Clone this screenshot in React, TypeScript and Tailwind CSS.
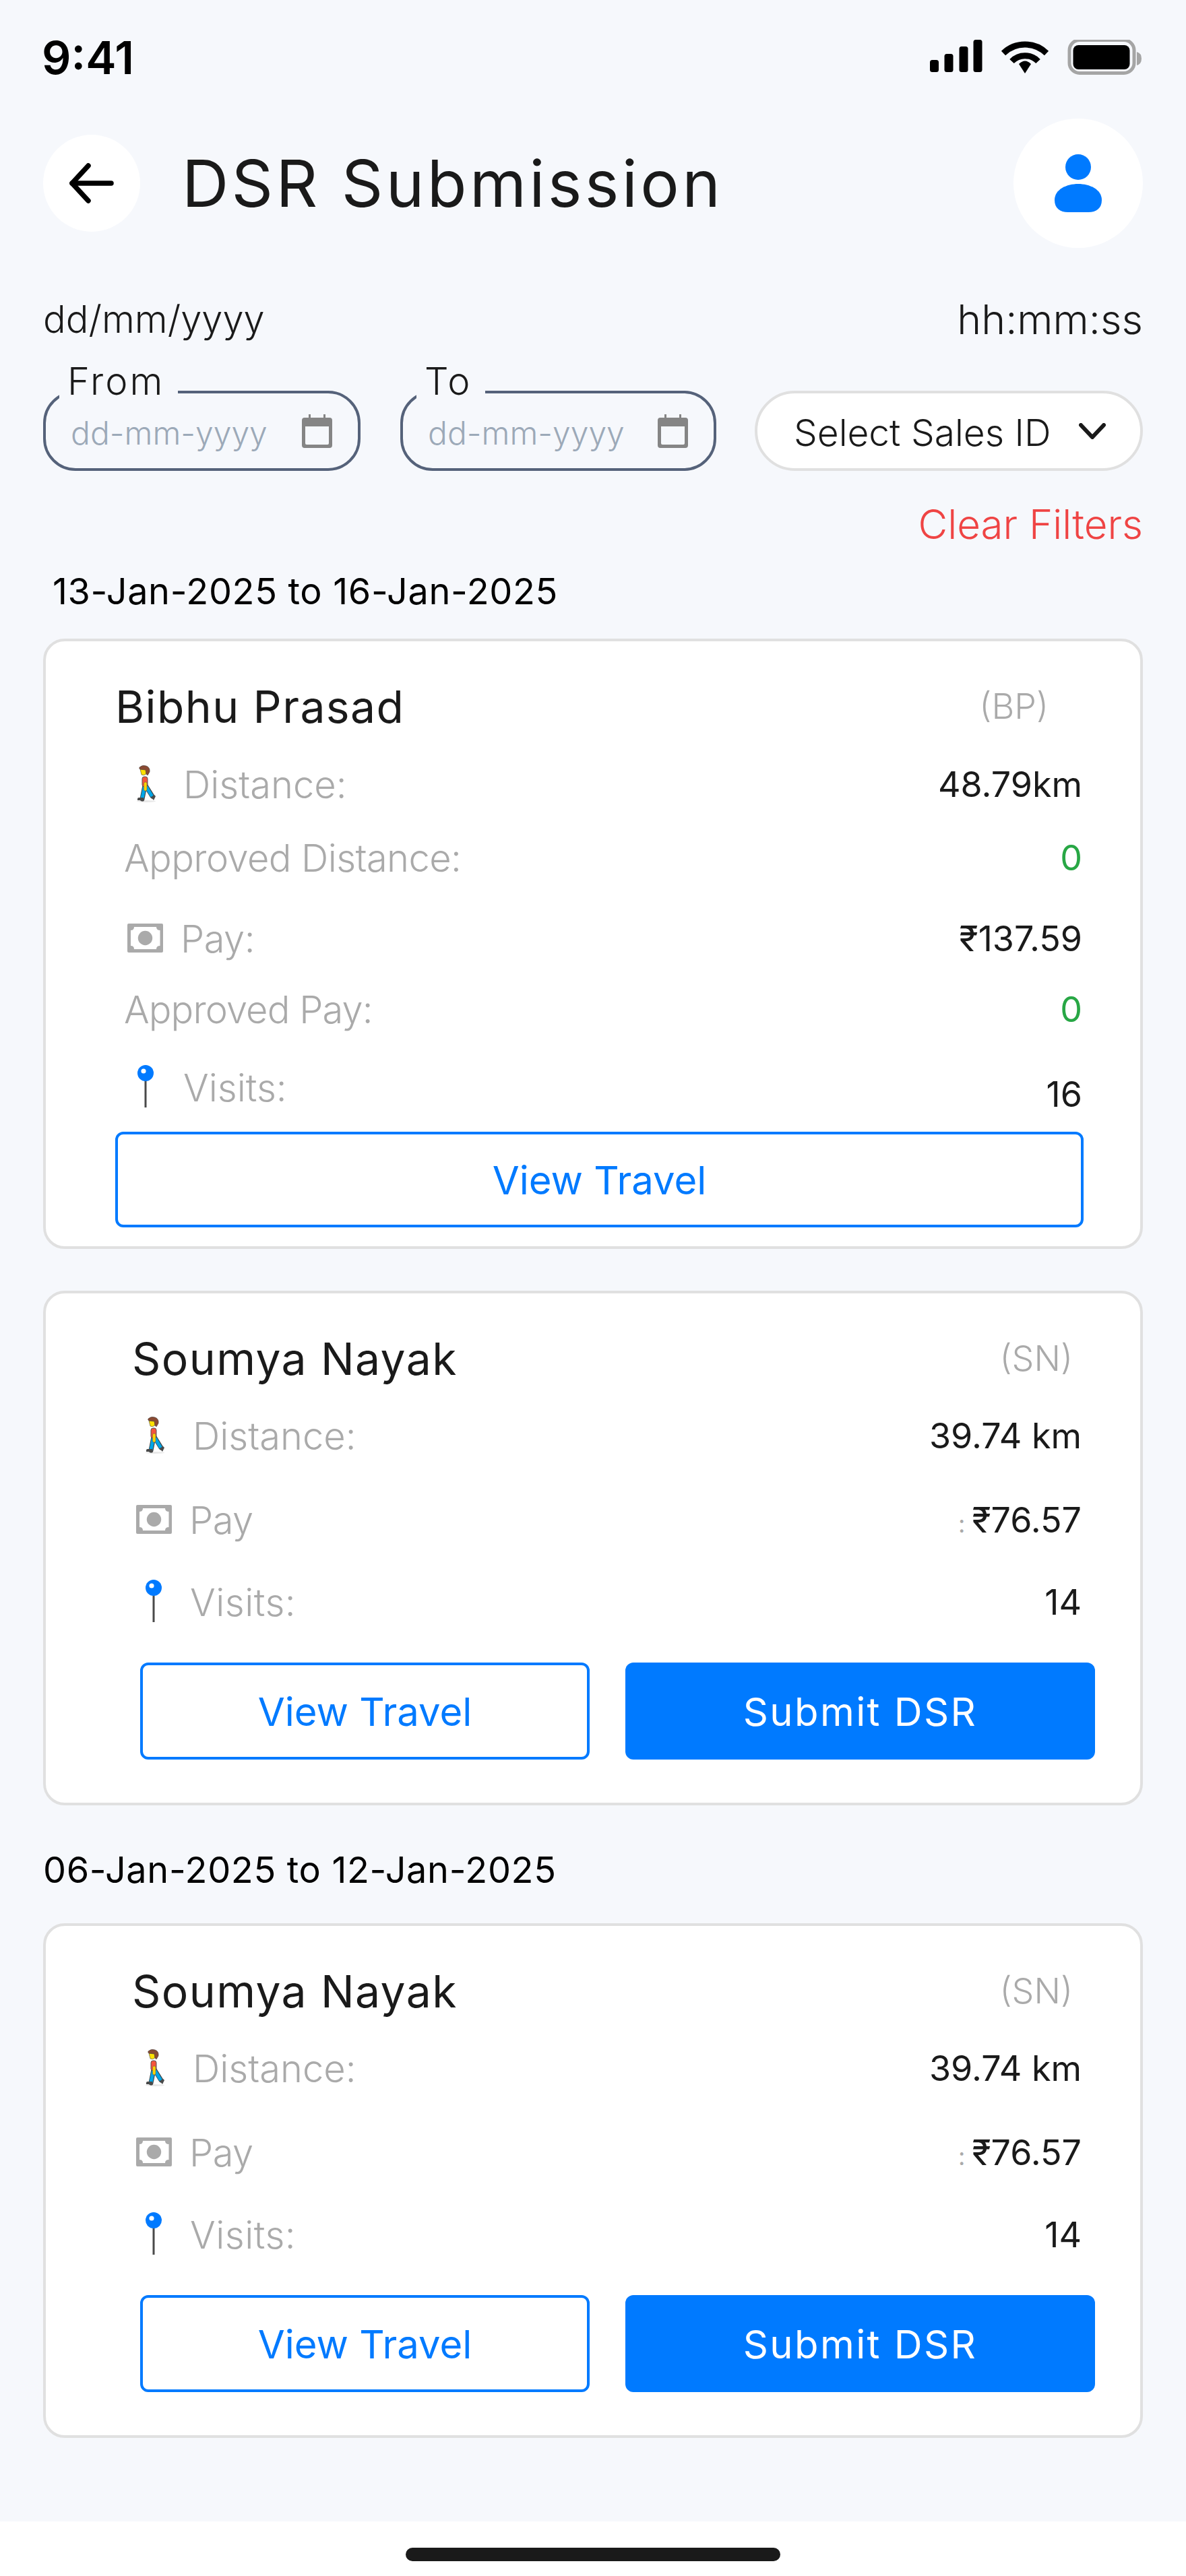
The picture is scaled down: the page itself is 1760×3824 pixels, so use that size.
import type { ReactNode } from 'react'

function WalkIcon() {
  return (
    <svg width="29" height="55" viewBox="0 0 29 55" className="shrink-0">
      <ellipse cx="14" cy="53.5" rx="14" ry="1.5" fill="#e8e8e8" />
      <path d="M12 30 L8 50" stroke="#444" strokeWidth="7" strokeLinecap="round" fill="none" />
      <path d="M13 30 L23 46" stroke="#444" strokeWidth="7" strokeLinecap="round" fill="none" />
      <path d="M12 30 L8 49" stroke="#00a5e6" strokeWidth="5" strokeLinecap="round" fill="none" />
      <path d="M13 30 L22 45" stroke="#00a5e6" strokeWidth="5" strokeLinecap="round" fill="none" />
      <path d="M1 52 L1 50 Q1 48 3 48 L10 48 L10 52 Z" fill="#4a4a4a" />
      <path d="M21 47 L26 44 L28 46 L25 52 Z" fill="#4a4a4a" />
      <rect x="8" y="17" width="8" height="15" rx="3" fill="#f4543c" stroke="#555" strokeWidth="1" />
      <rect x="10.5" y="25" width="4.5" height="13" rx="2" fill="#ffd400" stroke="#555" strokeWidth="0.5" />
      <path d="M5 6 L14 6 L14 13 Q10 16 7 14 Z" fill="#ffe100" stroke="#444" strokeWidth="0.6" />
      <path d="M4 3 Q8 -1 14 1 Q20 3 19 10 L16 15 L14 13 L13 7 L5 6 Q3 5 4 3 Z" fill="#8a4a32" stroke="#444" strokeWidth="0.6" />
    </svg>
  )
}

function MoneyIcon() {
  return (
    <svg width="53" height="43" viewBox="0 0 53 43" className="shrink-0">
      <rect width="53" height="43" rx="2" fill="#aaaaaa" />
      <path
        d="M10 5 H43 Q43 10 48.5 10 V33 Q43 33 43 38 H10 Q10 33 5 33 V10 Q10 10 10 5 Z"
        fill="#ffffff"
      />
      <circle cx="26.5" cy="21.5" r="10.7" fill="#aaaaaa" />
    </svg>
  )
}

function PinIcon() {
  return (
    <svg width="24" height="64" viewBox="0 0 24 64" className="shrink-0">
      <rect x="10.5" y="22" width="3" height="41" fill="#4a4a4a" />
      <circle cx="12" cy="12" r="12" fill="#007aff" />
      <circle cx="9" cy="9" r="3.6" fill="#ffffff" />
    </svg>
  )
}

function CalendarIcon() {
  return (
    <svg width="45" height="50" viewBox="0 0 45 50" className="shrink-0">
      <path
        fillRule="evenodd"
        fill="#858585"
        d="M10 0 H13 V5 H32 V0 H35 V5 H41 Q45 5 45 9 V46 Q45 50 41 50 H4 Q0 50 0 46 V9 Q0 5 4 5 H10 Z M5 18 V43 Q5 45 7 45 H38 Q40 45 40 43 V18 Z"
      />
    </svg>
  )
}

function DateField({ label, labelClass }: { label: string; labelClass: string }) {
  return (
    <div className={`relative flex h-[119px] items-center justify-between rounded-[48px] border-[4px] border-[#55627a] pl-[37px] pr-[38px] ${labelClass}`}>
      <span className="absolute -top-[48px] left-[20px] h-[58px] bg-[#f6f8fc] pl-[12px] pr-[20px] text-[56px] font-light leading-[60px] tracking-[3px] text-[#1a1a1a]">
        {label}
      </span>
      <span className="pt-[6px] text-[48px] font-light text-[#9ca9b8]">dd-mm-yyyy</span>
      <CalendarIcon />
    </div>
  )
}

function Row({ icon, label, value, rowClass, labelClass, valueClass }: { icon?: ReactNode; label: string; value: ReactNode; rowClass: string; labelClass: string; valueClass?: string }) {
  return (
    <div className={`flex items-center justify-between ${rowClass}`}>
      <div className={`flex items-center text-[56px] font-light text-[#aaaaaa] ${labelClass}`}>
        {icon}
        <span className="pt-[3px]">{label}</span>
      </div>
      <span className={`pt-[3px] text-[52px] ${valueClass ?? 'text-[#1a1a1a]'}`}>{value}</span>
    </div>
  )
}

function SubmitCard() {
  return (
    <div className="rounded-[32px] border-[4px] border-[#e0e0e0] bg-white pb-[64px] pl-[140px] pr-[67px] pt-[36px]">
      <div className="-ml-[12px] flex h-[120px] items-center justify-between pr-[33px] pt-[2px]">
        <span className="text-[66px] tracking-[1.4px] text-[#1a1a1a]">Soumya Nayak</span>
        <span className="text-[52px] font-light text-[#aaaaaa]">(SN)</span>
      </div>
      <Row rowClass="h-[108px] pr-[20px]" labelClass="gap-[41px] pl-[8px]" icon={<WalkIcon />} label="Distance:" value="39.74 km" />
      <Row rowClass="h-[142px] pr-[20px]" labelClass="gap-[26px] -ml-[6px] tracking-[-0.5px]" icon={<MoneyIcon />} label="Pay" value={<><span className="text-[36px] text-[#aaaaaa]">: </span>₹76.57</>} />
      <Row rowClass="h-[102px] pr-[20px]" labelClass="gap-[42px] pl-[8px] tracking-[0.5px]" icon={<PinIcon />} label="Visits:" value="14" />
      <div className="mt-[40px] flex justify-between">
        <button className="h-[144px] w-[667px] rounded-[12px] border-[4px] border-[#007aff] bg-white pt-[2px] text-[58px] text-[#007aff]">View Travel</button>
        <button className="h-[144px] w-[697px] rounded-[12px] bg-[#007aff] pt-[2px] text-[58px] tracking-[2.4px] text-white">Submit DSR</button>
      </div>
    </div>
  )
}

export default function App() {
  return (
    <div className="flex h-[3824px] w-[1760px] flex-col bg-[#f6f8fc] font-['Inter',sans-serif]">
      {/* status bar */}
      <div className="flex h-[176px] items-start justify-between pl-[62px] pr-[64px] pt-[45px]">
        <span className="text-[68px] font-semibold leading-[80px] text-black">9:41</span>
        <svg width="316" height="54" viewBox="0 0 316 54" className="mt-[14px]">
          <rect x="0" y="30" width="13" height="18" rx="3.5" fill="#000" />
          <rect x="21.5" y="21" width="13" height="27" rx="3.5" fill="#000" />
          <rect x="43.5" y="10" width="13" height="38" rx="3.5" fill="#000" />
          <rect x="64.5" y="0" width="13" height="48" rx="3.5" fill="#000" />
          <g transform="translate(106 0)">
            <path d="M3 20 A46 46 0 0 1 67 20" stroke="#000" strokeWidth="9" fill="none" />
            <path d="M15.500 32 A27 27 0 0 1 54.500 32" stroke="#000" strokeWidth="9" fill="none" />
            <path d="M35 50 L26 36 Q35 27 44 36 Z" fill="#000" />
          </g>
          <rect x="207" y="0.500" width="96" height="49" rx="15" fill="none" stroke="#a5a5a5" strokeWidth="5" />
          <rect x="212.500" y="8" width="84" height="36" rx="8" fill="#000" />
          <path d="M307 18 Q314 20 314 28 Q314 36 307 38 Z" fill="#a5a5a5" />
        </svg>
      </div>

      {/* header */}
      <div className="flex h-[192px] items-center justify-between px-[64px]">
        <div className="flex items-center gap-[62px]">
          <div className="flex h-[144px] w-[144px] items-center justify-center rounded-full bg-white">
            <svg width="66" height="60" viewBox="0 0 66 60" fill="none" stroke="#000" strokeWidth="7.500" strokeLinecap="round" strokeLinejoin="round">
              <path d="M28 4 L4 30 L28 56" />
              <path d="M4 30 H62" />
            </svg>
          </div>
          <h1 className="text-[96px] font-normal tracking-[4.3px] text-[#1a1a1a]">DSR Submission</h1>
        </div>
        <div className="flex h-[192px] w-[192px] items-center justify-center rounded-full bg-white">
          <svg width="70" height="86" viewBox="0 0 70 86" fill="#007aff">
            <circle cx="35" cy="19" r="19" />
            <path d="M35 44 C52 44 70 52 70 68 C70 80 62 86 50 86 H20 C8 86 0 80 0 68 C0 52 18 44 35 44 Z" />
          </svg>
        </div>
      </div>

      {/* date and time */}
      <div className="mt-[70px] flex h-[72px] items-center justify-between px-[64px] font-light leading-none text-[#1a1a1a]">
        <span className="text-[56px]">dd/mm/yyyy</span>
        <span className="text-[61px]">hh:mm:ss</span>
      </div>

      {/* filters */}
      <div className="mt-[70px] flex items-start px-[64px]">
        <DateField label="From" labelClass="w-[471px]" />
        <DateField label="To" labelClass="ml-[59px] w-[469px]" />
        <div className="ml-[57px] flex h-[119px] flex-1 items-center justify-between rounded-full border-[4px] border-[#e0e0e0] bg-white pl-[54px] pr-[51px]">
          <span className="pt-[6px] text-[55px] font-light text-[#1a1a1a]">Select Sales ID</span>
          <svg width="40" height="24" viewBox="0 0 40 24" fill="none" stroke="#1a1a1a" strokeWidth="6" strokeLinecap="round" strokeLinejoin="round">
            <path d="M3 3 L20 21 L37 3" />
          </svg>
        </div>
      </div>

      <div className="mt-[47px] flex h-[64px] items-center justify-end px-[64px] text-[60px] font-light text-[#ef4444]">
        Clear Filters
      </div>

      <div className="mt-[37px] flex h-[60px] items-center pl-[78px] text-[54px] tracking-[0.65px] text-black">13-Jan-2025 to 16-Jan-2025</div>

      {/* first week */}
      <div className="mx-[64px] mt-[41px] rounded-[32px] border-[4px] border-[#e0e0e0] bg-white pb-[28px] pl-[103px] pr-[84px] pt-[36px]">
        <div className="flex h-[120px] items-center justify-between pr-[52px] pt-[2px]">
          <span className="text-[66px] tracking-[1.4px] text-[#1a1a1a]">Bibhu Prasad</span>
          <span className="text-[52px] font-light text-[#aaaaaa]">(BP)</span>
        </div>
        <Row rowClass="h-[110px] pr-[2px]" labelClass="gap-[40px] pl-[32px]" icon={<WalkIcon />} label="Distance:" value="48.79km" />
        <Row rowClass="h-[108px] pr-[2px]" labelClass="pl-[13px] tracking-[-0.6px]" label="Approved Distance:" value="0" valueClass="text-[#28a745]" />
        <Row rowClass="h-[132px] pr-[2px]" labelClass="gap-[26px] pl-[18px] tracking-[-0.5px]" icon={<MoneyIcon />} label="Pay:" value="₹137.59" />
        <Row rowClass="h-[78px] pr-[2px]" labelClass="pl-[13px] tracking-[-0.9px]" label="Approved Pay:" value="0" valueClass="text-[#28a745]" />
        <Row rowClass="mt-[20px] h-[124px] pr-[2px]" labelClass="mb-[10px] gap-[44px] pl-[33px]" icon={<PinIcon />} label="Visits:" value={<span className="relative top-[5px]">16</span>} />
        <button className="h-[142px] w-full rounded-[12px] border-[4px] border-[#007aff] bg-white pt-[2px] text-[58px] text-[#007aff]">View Travel</button>
      </div>

      <div className="mx-[64px] mt-[62px]">
        <SubmitCard />
      </div>

      <div className="mt-[65px] flex h-[60px] items-center pl-[64px] text-[54px] tracking-[0.65px] text-black">06-Jan-2025 to 12-Jan-2025</div>

      <div className="mx-[64px] mt-[50px]">
        <SubmitCard />
      </div>

      {/* home indicator */}
      <div className="mt-auto flex h-[81px] justify-center bg-white pt-[39px]">
        <div className="h-[20px] w-[556px] rounded-full bg-[#1a1a1a]" />
      </div>
    </div>
  )
}
